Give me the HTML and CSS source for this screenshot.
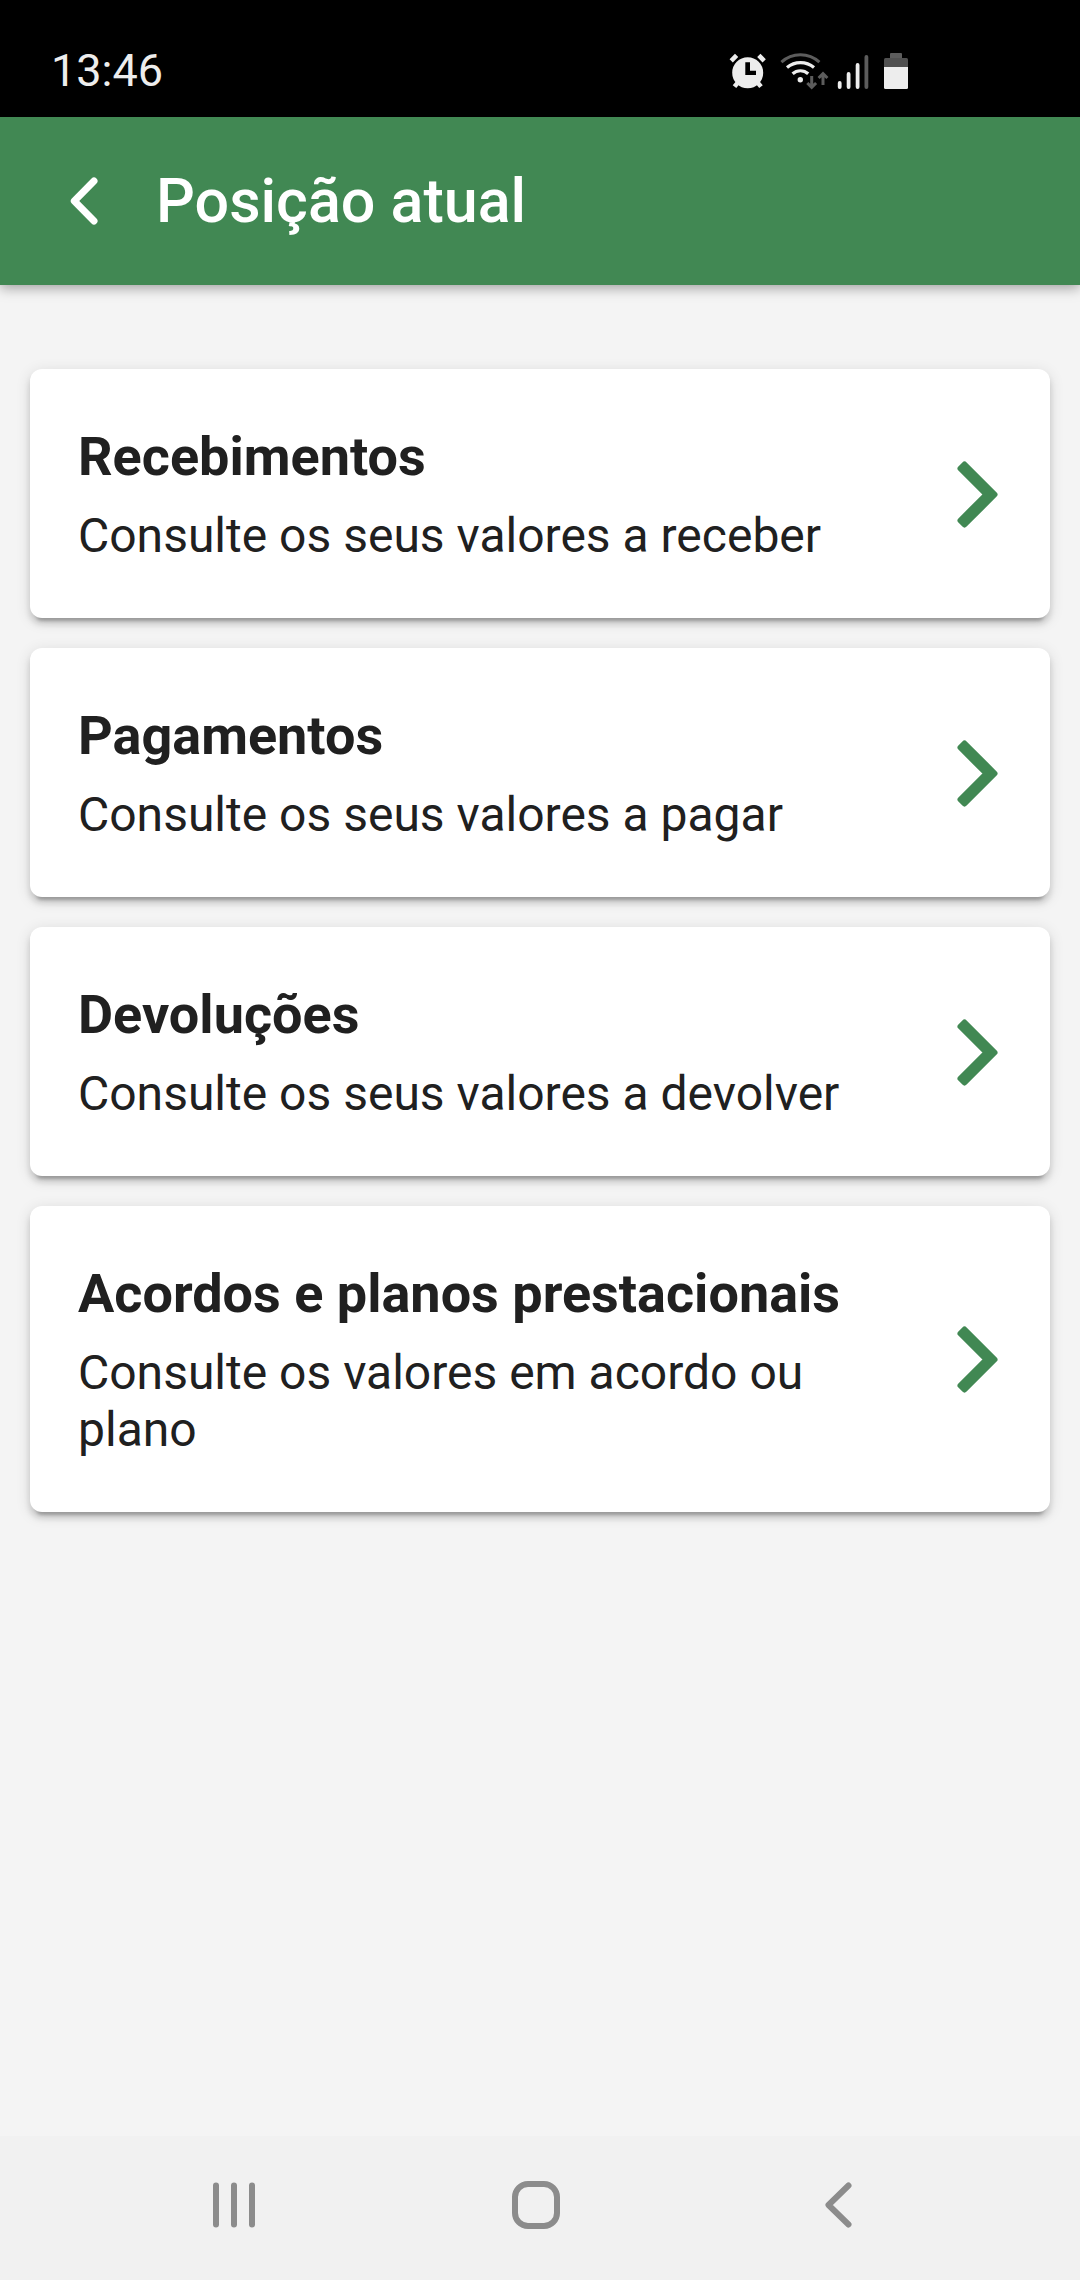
FILE: index.html
```html
<!DOCTYPE html>
<html lang="pt">
<head>
<meta charset="utf-8">
<meta name="viewport" content="width=device-width, initial-scale=1">
<title>Posição atual</title>
<link rel="stylesheet" href="styles.css">
</head>
<body>
<div class="status-bar">
  <time class="clock">13:46</time>
  <div class="status-icons">
    <svg width="40" height="36" viewBox="0 0 40 36" aria-hidden="true">
      <circle cx="19.7" cy="19.7" r="15.5" fill="#ededed"/>
      <path d="M3.2 7.8l5.4-5.4M36.2 7.8l-5.4-5.4M6.5 33.6l5-6M33 33.6l-5-6" fill="none" stroke="#ededed" stroke-width="4.6"/>
      <path d="M17.3 9.3H22v8.4h6v4.2H17.3z"/>
    </svg>
    <svg width="46" height="36" viewBox="0 0 46 36" aria-hidden="true">
      <path d="M1.4 9.2A28 28 0 0 1 39.4 9.2" fill="none" stroke="#5c5c5c" stroke-width="3"/>
      <path d="M7 14.6A21 21 0 0 1 34 14.6M12.6 20.8A11.5 11.5 0 0 1 28.2 20.8" fill="none" stroke="#ededed" stroke-width="3.2"/>
      <circle cx="20.3" cy="26.8" r="2.7" fill="#ededed"/>
      <path d="M31.7 23v11M27.3 30l4.4 4.4 4.4-4.4M43 32V21M38.6 25l4.4-4.4 4.4 4.4" fill="none" stroke="#5c5c5c" stroke-width="3"/>
    </svg>
    <svg width="34" height="36" viewBox="0 0 34 36" aria-hidden="true">
      <g stroke="#ededed" stroke-width="3.8" stroke-linecap="round">
        <path d="M1.7 30v4M10.6 21v13M19.6 12v22"/>
        <path d="M28.4 4v30" stroke="#5c5c5c"/>
      </g>
    </svg>
    <svg width="24" height="36" viewBox="0 0 24 36" aria-hidden="true">
      <path d="M7 0h10q1 0 1 1v4H6V1q0-1 1-1z" fill="#5c5c5c"/>
      <path d="M1.5 5h21Q24 5 24 6.5V14H0V6.5Q0 5 1.5 5z" fill="#505050"/>
      <path d="M0 14h24v20.5q0 1.5-1.5 1.5h-21Q0 36 0 34.5z" fill="#ededed"/>
    </svg>
  </div>
</div>

<header class="toolbar">
  <button class="back" type="button" aria-label="Voltar">
    <svg width="28" height="48" viewBox="0 0 28 48" aria-hidden="true">
      <path d="M24 4L4.3 24 24 44" fill="none" stroke="#fff" stroke-width="7" stroke-linecap="round" stroke-linejoin="round"/>
    </svg>
  </button>
  <h1 class="toolbar-title">Posição atual</h1>
</header>

<main class="content">
  <a class="card" href="#recebimentos">
    <div class="card-text">
      <h2 class="card-title">Recebimentos</h2>
      <p class="card-description">Consulte os seus valores a receber</p>
    </div>
    <svg class="chevron" viewBox="0 0 41 67" aria-hidden="true"><path d="M7.5 3.5l30 30-30 30-4-4 26-26-26-26z"/></svg>
  </a>
  <a class="card" href="#pagamentos">
    <div class="card-text">
      <h2 class="card-title">Pagamentos</h2>
      <p class="card-description">Consulte os seus valores a pagar</p>
    </div>
    <svg class="chevron" viewBox="0 0 41 67" aria-hidden="true"><path d="M7.5 3.5l30 30-30 30-4-4 26-26-26-26z"/></svg>
  </a>
  <a class="card" href="#devolucoes">
    <div class="card-text">
      <h2 class="card-title">Devoluções</h2>
      <p class="card-description">Consulte os seus valores a devolver</p>
    </div>
    <svg class="chevron" viewBox="0 0 41 67" aria-hidden="true"><path d="M7.5 3.5l30 30-30 30-4-4 26-26-26-26z"/></svg>
  </a>
  <a class="card" href="#acordos">
    <div class="card-text">
      <h2 class="card-title">Acordos e planos prestacionais</h2>
      <p class="card-description">Consulte os valores em acordo ou plano</p>
    </div>
    <svg class="chevron" viewBox="0 0 41 67" aria-hidden="true"><path d="M7.5 3.5l30 30-30 30-4-4 26-26-26-26z"/></svg>
  </a>
</main>

<nav class="system-nav" aria-label="Sistema">
  <button type="button" aria-label="Recentes">
    <svg width="48" height="48" viewBox="0 0 48 48" aria-hidden="true">
      <path d="M6 4.5v39M24 4.5v39M42 4.5v39"/>
    </svg>
  </button>
  <button type="button" aria-label="Início">
    <svg width="48" height="48" viewBox="0 0 48 48" aria-hidden="true">
      <rect x="3" y="3" width="42" height="42" rx="13"/>
    </svg>
  </button>
  <button type="button" aria-label="Voltar">
    <svg width="48" height="48" viewBox="0 0 48 48" aria-hidden="true">
      <path d="M34.5 4.5L14.5 24l20 19.5"/>
    </svg>
  </button>
</nav>
</body>
</html>
```
FILE: styles.css
```css
* {
  box-sizing: border-box;
}

body {
  display: flex;
  flex-direction: column;
  min-height: 100vh;
  margin: 0;
  background: #f4f4f4;
  color: #202020;
  font-family: Roboto, "Noto Sans", sans-serif;
}

button {
  padding: 0;
  border: 0;
  background: none;
}

svg {
  display: block;
  flex: none;
  overflow: visible;
}

.status-bar {
  display: flex;
  align-items: center;
  justify-content: space-between;
  padding: 44px 172px 19px 51px;
  background: #000;
  color: #ededed;
}

.clock {
  font-size: 45px;
  line-height: 54px;
}

.status-icons {
  display: flex;
  gap: 12px;
}

.toolbar {
  display: flex;
  align-items: center;
  min-height: 168px;
  padding: 0 54px;
  background: #418853;
  color: #fff;
  box-shadow: 0 3px 12px rgba(0, 0, 0, 0.35);
}

.back {
  display: flex;
  justify-content: center;
  width: 60px;
  margin-right: 42px;
}

.toolbar-title {
  margin: 0;
  font-size: 61px;
  font-weight: 500;
  line-height: 72px;
}

.content {
  display: flex;
  flex: 1;
  flex-direction: column;
  gap: 30px;
  padding: 84px 30px;
}

.card {
  display: flex;
  align-items: center;
  gap: 40px;
  padding: 55px 52px 54px 48px;
  border-radius: 12px;
  background: #fff;
  box-shadow:
    0 9px 3px -6px rgba(0, 0, 0, 0.2),
    0 6px 6px rgba(0, 0, 0, 0.14),
    0 3px 15px rgba(0, 0, 0, 0.12);
  color: inherit;
  text-decoration: none;
}

.card-text {
  flex: 1;
}

.card-title {
  margin: 0 0 17px;
  font-size: 54px;
  font-weight: 700;
  line-height: 66px;
}

.card-description {
  margin: 0;
  font-size: 48px;
  line-height: 57px;
}

.chevron {
  width: 41px;
  height: 67px;
  fill: #418853;
  stroke: #418853;
  stroke-width: 6;
  stroke-linejoin: round;
}

.system-nav {
  display: grid;
  grid-template-columns: repeat(3, 1fr);
  padding: 45px 91px 51px 83px;
  background: #f1f1f1;
}

.system-nav button {
  display: flex;
  justify-content: center;
}

.system-nav svg {
  fill: none;
  stroke: #8c8c8c;
  stroke-width: 6;
  stroke-linecap: round;
  stroke-linejoin: round;
}
```
